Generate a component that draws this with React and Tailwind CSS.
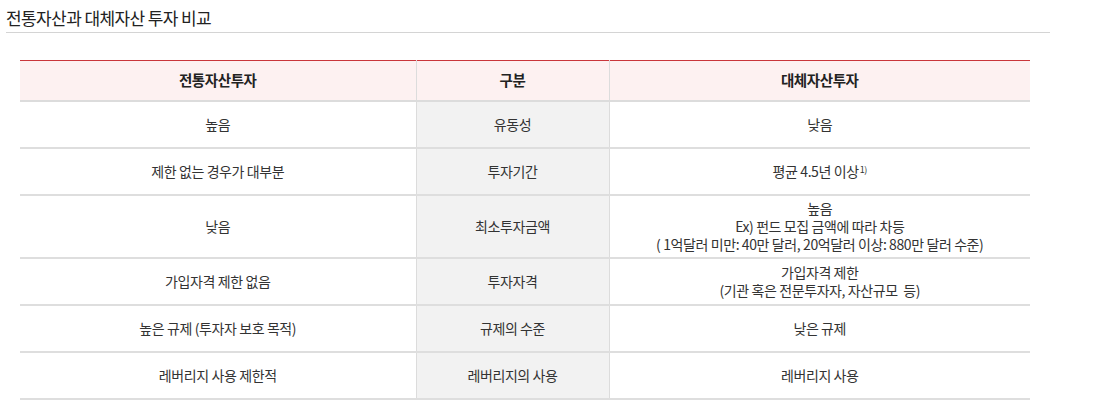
import React from 'react';

const rows = [
  { left: '높음', mid: '유동성', right: ['낮음'], h: 'h-[47px]' },
  { left: '제한 없는 경우가 대부분', mid: '투자기간', right: [<>평균 4.5년 이상<sup className="text-[9px] ml-[1px]">1)</sup></>], h: 'h-[47px]' },
  {
    left: '낮음',
    mid: '최소투자금액',
    right: ['높음', 'Ex) 펀드 모집 금액에 따라 차등', '( 1억달러 미만: 40만 달러, 20억달러 이상: 880만 달러 수준)'],
    h: 'h-[63px]',
  },
  { left: '가입자격 제한 없음', mid: '투자자격', right: ['가입자격 제한', '(기관 혹은 전문투자자, 자산규모  등)'], h: 'h-[47px]' },
  { left: '높은 규제 (투자자 보호 목적)', mid: '규제의 수준', right: ['낮은 규제'], h: 'h-[47px]' },
  { left: '레버리지 사용 제한적', mid: '레버리지의 사용', right: ['레버리지 사용'], h: 'h-[47px]' },
];

const App = () => {
  return (
    <div className="w-[1107px] h-[410px] bg-white text-[#333] font-['Noto_Sans_CJK_KR','Noto_Sans',sans-serif] overflow-hidden">
      <div className="pl-[6px] pt-[7px] w-[1050px]">
        <h2 className="text-[17px] tracking-[-0.6px] leading-[22px] text-[#222] pb-[3px] border-b border-[#d4d4d4]">전통자산과 대체자산 투자 비교</h2>
      </div>
      <div className="pl-[20px] pt-[27px]">
        <table className="w-[1010px] border-collapse table-fixed text-[14px] tracking-[-0.4px] text-center">
          <colgroup>
            <col className="w-[396px]" />
            <col className="w-[193px]" />
            <col className="w-[421px]" />
          </colgroup>
          <thead>
            <tr className="h-[40px] bg-[#fdf1f1] border-t border-[#c9363b] border-b-2 border-b-[#dcdcdc]">
              <th className="font-bold text-[#222] text-[14.5px]">전통자산투자</th>
              <th className="font-bold text-[#222] text-[14.5px] border-x border-[#dcdcdc]">구분</th>
              <th className="font-bold text-[#222] text-[14.5px]">대체자산투자</th>
            </tr>
          </thead>
          <tbody>
            {rows.map((r, i) => (
              <tr key={i} className={`${r.h} border-b-2 border-[#dedede]`}>
                <td className="leading-[18px]">{r.left}</td>
                <td className="bg-[#f2f2f2] border-x border-[#dcdcdc] leading-[18px]">{r.mid}</td>
                <td className="leading-[18px] whitespace-pre">
                  {r.right.map((t, j) => (
                    <div key={j}>{t}</div>
                  ))}
                </td>
              </tr>
            ))}
          </tbody>
        </table>
      </div>
    </div>
  );
};

export default App;
